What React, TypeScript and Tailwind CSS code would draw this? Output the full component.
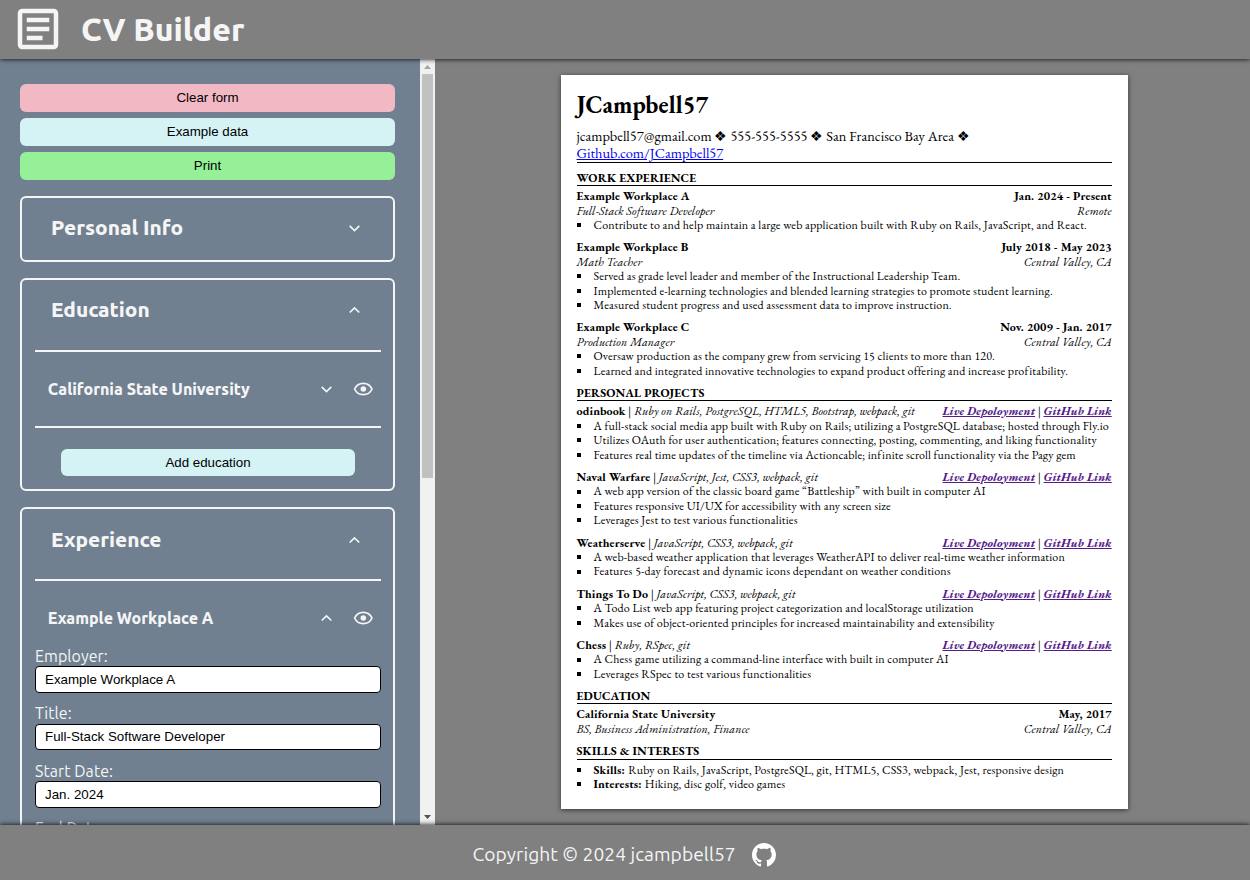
import type { ReactNode } from "react";
import { MdOutlineArticle } from "react-icons/md";

function Chevron({ up = false }: { up?: boolean }) {
  return (
    <svg viewBox="0 0 12 8" className="h-[8px] w-[12px]" fill="none" stroke="#f5f5f5" strokeWidth="1.7">
      <path d={up ? "M1.700 6.500 6.500 1.900l4.800 4.600" : "M1.700 1.900l4.800 4.600 4.800-4.600"} />
    </svg>
  );
}

function Eye() {
  return (
    <svg viewBox="0 0 20 14" className="h-[14px] w-[20px]" fill="none" stroke="#f5f5f5" strokeWidth="1.7">
      <path d="M1.600 7C3.400 3 6.400 1.300 10.300 1.300S17.200 3 19 7c-1.800 4-4.800 5.700-8.700 5.700S3.400 11 1.600 7Z" />
      <circle cx="10.3" cy="7" r="2.8" fill="#f5f5f5" stroke="none" />
    </svg>
  );
}

function Section({ title, open = false, className = "", rowClass = "pb-[1.4px]", children }: { title: string; open?: boolean; className?: string; rowClass?: string; children?: ReactNode }) {
  return (
    <section className={`mb-4 shrink-0 rounded-md border-2 border-[#f5f5f5] pr-3 pl-[13px] ${className}`}>
      <div className={`flex h-[62px] items-center justify-between pr-[21px] pl-4 ${rowClass}`}>
        <h2 className="text-[20.8px] leading-6 font-extrabold">{title}</h2>
        <Chevron up={open} />
      </div>
      {children}
    </section>
  );
}

function Entry({ title, open = false }: { title: string; open?: boolean }) {
  return (
    <div className="flex h-[74px] items-center pr-2 pl-[12.8px]">
      <h3 className="flex-1 text-[16px] font-extrabold">{title}</h3>
      <Chevron up={open} />
      <span className="ml-[21px] flex">
        <Eye />
      </span>
    </div>
  );
}

function Field({ label, value }: { label: string; value: string }) {
  return (
    <label className="block h-[57.5px]">
      <span className="block h-[20.1px] text-[16px] leading-[20px] tracking-[0.06px]">{label}</span>
      <input
        defaultValue={value}
        className="block h-[26.5px] w-full rounded-[4px] border border-black bg-white px-[9px] font-['Liberation_Sans',sans-serif] text-[13.333px] text-black"
      />
    </label>
  );
}

function Btn({ className, children }: { className: string; children: ReactNode }) {
  return (
    <button className={`shrink-0 rounded-md font-['Liberation_Sans',sans-serif] text-[13.333px] text-black ${className}`}>
      {children}
    </button>
  );
}

function Heading({ className = "mb-[3px]", children }: { className?: string; children: string }) {
  return (
    <h2 className={`h-[15.4px] border-b border-black text-[12px] leading-[14.4px] font-bold ${className}`}>
      {children}
    </h2>
  );
}

function Bullets({ items }: { items: (string | [string, string])[] }) {
  return (
    <ul>
      {items.map((item) => {
        const [lead, text] = typeof item === "string" ? ["", item] : item;
        return (
          <li key={text} className="flex h-[14.4px] items-center whitespace-nowrap">
            <span className="mr-[13px] size-1 shrink-0 bg-black" />
            <span>
              {lead && <b>{lead} </b>}
              {text}
            </span>
          </li>
        );
      })}
    </ul>
  );
}

const jobs = [
  {
    name: "Example Workplace A",
    date: "Jan. 2024 - Present",
    role: "Full-Stack Software Developer",
    place: "Remote",
    items: ["Contribute to and help maintain a large web application built with Ruby on Rails, JavaScript, and React."],
  },
  {
    name: "Example Workplace B",
    date: "July 2018 - May 2023",
    role: "Math Teacher",
    place: "Central Valley, CA",
    items: [
      "Served as grade level leader and member of the Instructional Leadership Team.",
      "Implemented e-learning technologies and blended learning strategies to promote student learning.",
      "Measured student progress and used assessment data to improve instruction.",
    ],
  },
  {
    name: "Example Workplace C",
    date: "Nov. 2009 - Jan. 2017",
    role: "Production Manager",
    place: "Central Valley, CA",
    items: [
      "Oversaw production as the company grew from servicing 15 clients to more than 120.",
      "Learned and integrated innovative technologies to expand product offering and increase profitability.",
    ],
  },
];

const projects = [
  {
    name: "odinbook",
    tech: "Ruby on Rails, PostgreSQL, HTML5, Bootstrap, webpack, git",
    items: [
      "A full-stack social media app built with Ruby on Rails; utilizing a PostgreSQL database; hosted through Fly.io",
      "Utilizes OAuth for user authentication; features connecting, posting, commenting, and liking functionality",
      "Features real time updates of the timeline via Actioncable; infinite scroll functionality via the Pagy gem",
    ],
  },
  {
    name: "Naval Warfare",
    tech: "JavaScript, Jest, CSS3, webpack, git",
    items: [
      "A web app version of the classic board game “Battleship” with built in computer AI",
      "Features responsive UI/UX for accessibility with any screen size",
      "Leverages Jest to test various functionalities",
    ],
  },
  {
    name: "Weatherserve",
    tech: "JavaScript, CSS3, webpack, git",
    items: [
      "A web-based weather application that leverages WeatherAPI to deliver real-time weather information",
      "Features 5-day forecast and dynamic icons dependant on weather conditions",
    ],
  },
  {
    name: "Things To Do",
    tech: "JavaScript, CSS3, webpack, git",
    items: [
      "A Todo List web app featuring project categorization and localStorage utilization",
      "Makes use of object-oriented principles for increased maintainability and extensibility",
    ],
  },
  {
    name: "Chess",
    tech: "Ruby, RSpec, git",
    items: [
      "A Chess game utilizing a command-line interface with built in computer AI",
      "Leverages RSpec to test various functionalities",
    ],
  },
];

function Pair({ left, right, className }: { left: string; right: string; className: string }) {
  return (
    <div className={`flex h-[14.4px] items-center justify-between pr-[0.3px] whitespace-nowrap ${className}`}>
      <span>{left}</span>
      <span>{right}</span>
    </div>
  );
}

function Resume() {
  return (
    <article className="h-[734px] w-[567px] bg-white pt-4 pr-4 pl-[15.5px] font-['EB_Garamond','Liberation_Serif',serif] text-[12px] leading-[14.4px] tracking-[0.15px] text-black shadow-[0_1px_5px_rgba(0,0,0,0.6)]">
      <h1 className="h-[27px] text-[24px] leading-[28px] font-bold">JCampbell57</h1>
      <div className="mt-[9px] h-[36px] border-b border-black text-[14.4px] leading-[17.3px] tracking-[0.012px]">
        jcampbell57@gmail.com ❖ 555-555-5555 ❖ San Francisco Bay Area ❖
        <br />
        <a className="text-[#0000ee] underline">Github.com/JCampbell57</a>
      </div>
      <Heading className="mt-[7.9px] mb-[3px]">WORK EXPERIENCE</Heading>
      {jobs.map((j) => (
        <div key={j.name} className="mb-2">
          <Pair left={j.name} right={j.date} className="font-bold" />
          <Pair left={j.role} right={j.place} className="italic" />
          <Bullets items={j.items} />
        </div>
      ))}
      <Heading className="mb-[3.1px]">PERSONAL PROJECTS</Heading>
      {projects.map((p) => (
        <div key={p.name} className="mb-2">
          <div className="flex h-[14.4px] items-center justify-between pr-[0.3px] whitespace-nowrap">
            <span>
              <b>{p.name}</b> | <i>{p.tech}</i>
            </span>
            <span>
              <a className="font-bold text-[#551a8b] italic underline">Live Depoloyment</a> |{" "}
              <a className="font-bold text-[#551a8b] italic underline">GitHub Link</a>
            </span>
          </div>
          <Bullets items={p.items} />
        </div>
      ))}
      <Heading className="-mt-[0.1px] mb-[3.1px]">EDUCATION</Heading>
      <div className="mb-2">
        <Pair left="California State University" right="May, 2017" className="font-bold" />
        <Pair left="BS, Business Administration, Finance" right="Central Valley, CA" className="italic" />
      </div>
      <Heading>SKILLS &amp; INTERESTS</Heading>
      <Bullets
        items={[
          ["Skills:", "Ruby on Rails, JavaScript, PostgreSQL, git, HTML5, CSS3, webpack, Jest, responsive design"],
          ["Interests:", "Hiking, disc golf, video games"],
        ]}
      />
    </article>
  );
}

export default function App() {
  return (
    <div className="flex h-[880px] w-[1250px] flex-col overflow-hidden bg-[#808080] font-['Ubuntu','Noto_Sans',sans-serif] text-[#f5f5f5]">
      <header className="z-10 flex h-[59px] shrink-0 items-center bg-[#808080] pl-[11px] shadow-[0_0_5px_#000]">
        <MdOutlineArticle className="mb-0.5 size-[54px]" />
        <h1 className="ml-4 pb-0.5 text-[32px] font-extrabold">CV Builder</h1>
      </header>
      <main className="flex h-[766px] shrink-0">
        <aside className="flex w-[420px] flex-col overflow-hidden bg-[#708090] pt-[25px] pr-[25px] pl-5">
          <Btn className="mb-1.5 h-7 bg-[#f2b9c5]">Clear form</Btn>
          <Btn className="mb-1.5 h-7 bg-[#d5f3f5]">Example data</Btn>
          <Btn className="mb-4 h-7 bg-[#95f098]">Print</Btn>
          <Section title="Personal Info" />
          <Section title="Education" open className="h-[213px]">
            <div className="mt-2 border-t-2 border-[#f5f5f5]" />
            <Entry title="California State University" />
            <div className="flex justify-center border-t-2 border-[#f5f5f5] pt-[21px]">
              <Btn className="h-[27px] w-[294px] bg-[#d5f3f5]">Add education</Btn>
            </div>
          </Section>
          <Section title="Experience" open className="h-[600px]" rowClass="pb-0">
            <div className="mt-2 border-t-2 border-[#f5f5f5]" />
            <Entry title="Example Workplace A" open />
            <div className="-mt-[9.1px]">
              <Field label="Employer:" value="Example Workplace A" />
              <Field label="Title:" value="Full-Stack Software Developer" />
              <Field label="Start Date:" value="Jan. 2024" />
              <Field label="End Date:" value="Present" />
            </div>
          </Section>
        </aside>
        <div className="flex w-[15px] flex-col items-center justify-between bg-[#f1f1f1]">
          <svg viewBox="0 0 15 15" className="size-[15px]">
            <path d="M4 10h7L7.5 6Z" fill="#a3a3a3" />
          </svg>
          <div className="mb-auto h-[404px] w-[11px] bg-[#c1c1c1]" />
          <svg viewBox="0 0 15 15" className="size-[15px]">
            <path d="M4 5h7l-3.500 4Z" fill="#505050" />
          </svg>
        </div>
        <div className="flex flex-1 justify-center pt-4 pl-[4px]">
          <Resume />
        </div>
      </main>
      <footer className="z-10 flex h-[55px] shrink-0 items-center bg-[#808080] pl-[472.5px] text-[19.2px] tracking-[0.05px] shadow-[0_0_5px_#000]">
        <span className="w-[263.5px] pt-1 whitespace-nowrap">Copyright © 2024 jcampbell57</span>
        <svg viewBox="0 0 16 16" className="mt-1 ml-4 size-6" fill="#ffffff">
          <path d="M8 0C3.58 0 0 3.58 0 8c0 3.54 2.29 6.53 5.47 7.59.4.07.55-.17.55-.38 0-.19-.01-.82-.01-1.49-2.01.37-2.53-.49-2.69-.94-.09-.23-.48-.94-.82-1.13-.28-.15-.68-.52-.01-.53.63-.01 1.08.58 1.23.82.72 1.21 1.87.87 2.33.66.07-.52.28-.87.51-1.07-1.78-.2-3.64-.89-3.64-3.95 0-.87.31-1.59.82-2.15-.08-.2-.36-1.02.08-2.12 0 0 .67-.21 2.2.82.64-.18 1.32-.27 2-.27s1.36.09 2 .27c1.53-1.04 2.2-.82 2.2-.82.44 1.1.16 1.92.08 2.12.51.56.82 1.27.82 2.15 0 3.07-1.87 3.75-3.65 3.95.29.25.54.73.54 1.48 0 1.07-.01 1.93-.01 2.2 0 .21.15.46.55.38A8.01 8.01 0 0 0 16 8c0-4.42-3.58-8-8-8Z" />
        </svg>
      </footer>
    </div>
  );
}
